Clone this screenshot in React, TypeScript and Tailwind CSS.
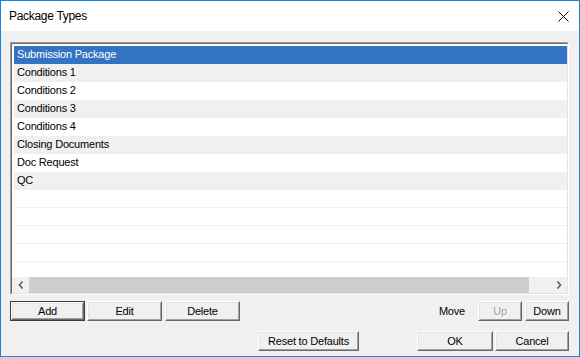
import React from "react";

const rows = [
  "Submission Package",
  "Conditions 1",
  "Conditions 2",
  "Conditions 3",
  "Conditions 4",
  "Closing Documents",
  "Doc Request",
  "QC",
];

function Btn({
  label,
  w,
  def,
  disabled,
}: {
  label: string;
  w: string;
  def?: boolean;
  disabled?: boolean;
}) {
  const inner = (
    <div className="h-full w-full border-t border-l border-white border-b border-r border-b-[#696969] border-r-[#696969]">
      <div className="h-full w-full border-t border-l border-[#e3e3e3] border-b border-r border-b-[#a0a0a0] border-r-[#a0a0a0] bg-[#f0f0f0] flex items-center justify-center">
        <span
          className={
            disabled
              ? "text-[#a0a0a0] [text-shadow:1px_1px_0_#ffffff]"
              : "text-black"
          }
        >
          {label}
        </span>
      </div>
    </div>
  );
  return (
    <div className={`${w} h-[20px] shrink-0 ${def ? "border border-[#3c3c3c]" : ""}`}>
      {inner}
    </div>
  );
}

export default function App() {
  return (
    <div
      className="w-[580px] h-[357px] border border-[#1883d7] flex flex-col bg-[#f0f0f0] text-[11px] tracking-[-0.2px]"
      style={{ fontFamily: '"Liberation Sans", Arial, sans-serif' }}
    >
      <div className="h-[30px] bg-white flex items-center justify-between pl-[8px] pr-[10px]">
        <span className="text-[12px] tracking-[-0.3px] text-black">Package Types</span>
        <svg width="11" height="11" viewBox="0 0 11 11">
          <path d="M0.5 0.5 L10.5 10.5 M10.5 0.5 L0.5 10.5" stroke="#000" strokeWidth="1" />
        </svg>
      </div>
      <div className="flex-1 flex flex-col pl-[9px] pr-[10px] pt-[11px]">
        {/* Listbox */}
        <div className="h-[253px] border-t border-l border-[#a0a0a0] border-b border-r border-b-white border-r-white">
          <div className="h-full flex flex-col border-t border-l border-[#696969] border-b border-r border-b-[#e3e3e3] border-r-[#e3e3e3] bg-white">
            <div className="flex-1 overflow-hidden pt-[2px] pl-[2px]">
              {rows.map((r, i) => (
                <div
                  key={r}
                  className={`h-[18px] flex items-center pl-[3px] pb-[2px] ${
                    i === 0
                      ? "bg-[#3373c4] text-white"
                      : i % 2 === 1
                      ? "bg-[#f0f0f0] text-black"
                      : "bg-white text-black"
                  }`}
                >
                  {r}
                </div>
              ))}
              {[0, 1, 2, 3, 4].map((k) => (
                <div key={k} className="h-[18px] border-b border-[#f0f0f0] bg-white" />
              ))}
            </div>
            <div className="h-[16px] flex bg-[#f0f0f0]">
              <div className="w-[17px] flex items-center justify-center">
                <svg width="6" height="8" viewBox="0 0 6 8">
                  <path d="M4.5 0.5 L1.5 4 L4.5 7.5" stroke="#606060" strokeWidth="1.6" fill="none" />
                </svg>
              </div>
              <div className="w-[500px] bg-[#cdcdcd]" />
              <div className="flex-1" />
              <div className="w-[17px] flex items-center justify-center">
                <svg width="6" height="8" viewBox="0 0 6 8">
                  <path d="M1.5 0.5 L4.5 4 L1.5 7.5" stroke="#606060" strokeWidth="1.6" fill="none" />
                </svg>
              </div>
            </div>
          </div>
        </div>
        {/* Buttons row */}
        <div className="mt-[6px] flex items-center">
          <Btn label="Add" w="w-[75px]" def />
          <div className="ml-[2px]">
            <Btn label="Edit" w="w-[75px]" />
          </div>
          <div className="ml-[3px]">
            <Btn label="Delete" w="w-[75px]" />
          </div>
          <div className="flex-1" />
          <span className="text-black mr-[13px]">Move</span>
          <Btn label="Up" w="w-[44px]" disabled />
          <div className="ml-[3px]">
            <Btn label="Down" w="w-[44px]" />
          </div>
        </div>
        <div className="mt-[10px] flex items-center">
          <div className="ml-[248px]">
            <Btn label="Reset to Defaults" w="w-[101px]" />
          </div>
          <div className="flex-1" />
          <Btn label="OK" w="w-[76px]" />
          <div className="ml-[2px]">
            <Btn label="Cancel" w="w-[74px]" />
          </div>
        </div>
      </div>
    </div>
  );
}
